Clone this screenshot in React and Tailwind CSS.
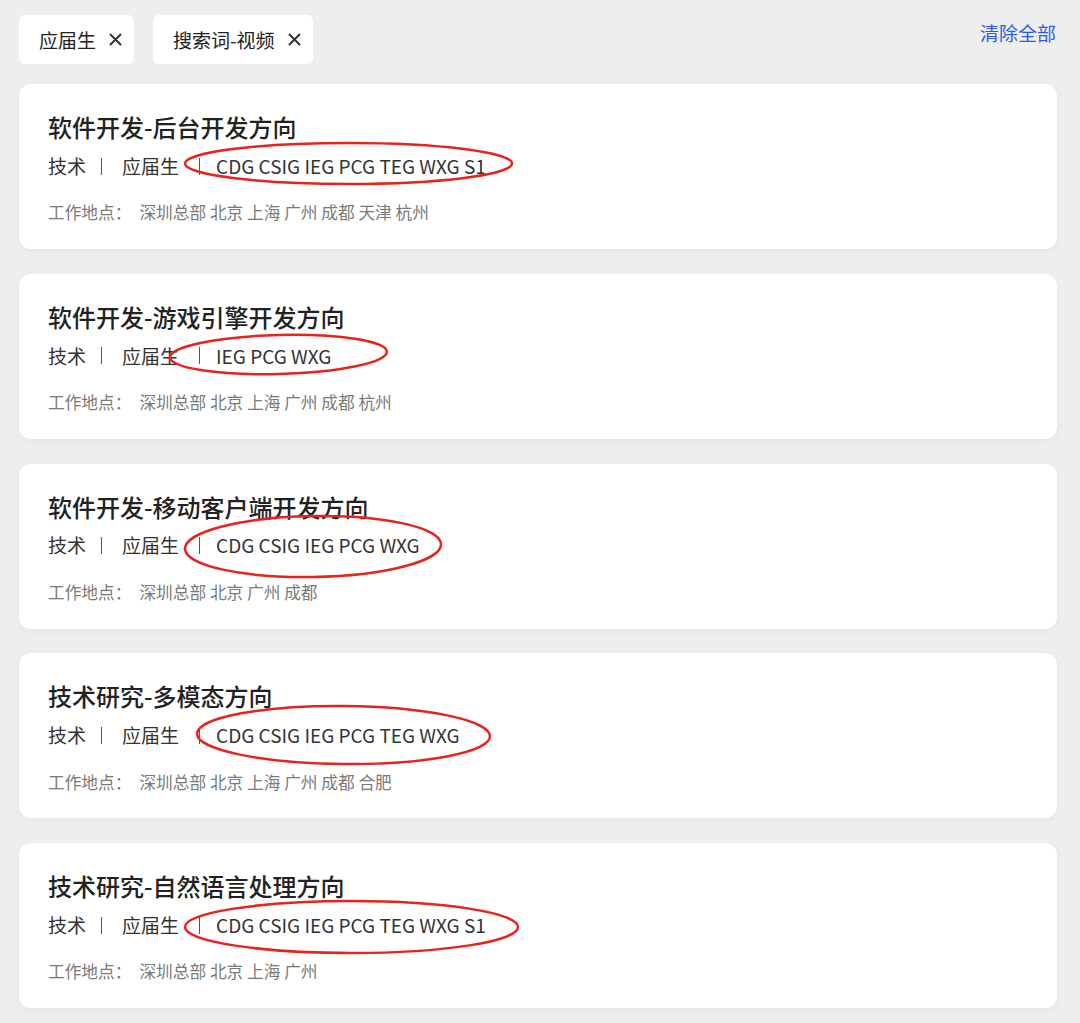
import React from 'react';

const jobs = [
  {
    title: '软件开发-后台开发方向',
    groups: 'CDG CSIG IEG PCG TEG WXG S1',
    places: '深圳总部 北京 上海 广州 成都 天津 杭州',
    ring: { left: 166, top: 59, w: 327, h: 41, rot: 0 },
  },
  {
    title: '软件开发-游戏引擎开发方向',
    groups: 'IEG PCG WXG',
    places: '深圳总部 北京 上海 广州 成都 杭州',
    ring: { left: 151, top: 61, w: 217, h: 39, rot: -1.5 },
  },
  {
    title: '软件开发-移动客户端开发方向',
    groups: 'CDG CSIG IEG PCG WXG',
    places: '深圳总部 北京 广州 成都',
    ring: { left: 166, top: 52, w: 256, h: 61, rot: -1 },
  },
  {
    title: '技术研究-多模态方向',
    groups: 'CDG CSIG IEG PCG TEG WXG',
    places: '深圳总部 北京 上海 广州 成都 合肥',
    ring: { left: 178, top: 53, w: 293, h: 58, rot: 0.5 },
  },
  {
    title: '技术研究-自然语言处理方向',
    groups: 'CDG CSIG IEG PCG TEG WXG S1',
    places: '深圳总部 北京 上海 广州',
    ring: { left: 166, top: 58, w: 333, h: 52, rot: 0 },
  },
];

const CloseIcon = () => (
  <svg width="13" height="13" viewBox="0 0 13 13" className="shrink-0">
    <path d="M1.5 1.5 L11.5 11.5 M11.5 1.5 L1.5 11.5" stroke="#333" strokeWidth="2" strokeLinecap="round" />
  </svg>
);

const Ring = ({ left, top, w, h, rot }) => (
  <svg
    width={w + 6}
    height={h + 6}
    viewBox={`0 0 ${w + 6} ${h + 6}`}
    className="absolute pointer-events-none"
    style={{ left: left - 3, top: top - 3, transform: `rotate(${rot}deg)` }}
  >
    <ellipse cx={(w + 6) / 2} cy={(h + 6) / 2} rx={w / 2} ry={h / 2} fill="none" stroke="#e8231c" strokeWidth="2.5" />
  </svg>
);

const Tag = ({ label }) => (
  <div className="h-[49px] flex items-center gap-[13px] pl-[20px] pr-[12px] bg-white rounded-[6px]">
    <span className="text-[19px] leading-none text-[#222]">{label}</span>
    <CloseIcon />
  </div>
);

export default function App() {
  return (
    <div
      className="min-h-screen bg-[#eeeeee] pt-[15px] pl-[19px] pr-[23px] pb-[16px]"
      style={{ fontFamily: '"Noto Sans CJK SC", "Noto Sans", sans-serif' }}
    >
      <div className="flex items-start justify-between">
        <div className="flex gap-[19px]">
          <Tag label="应届生" />
          <Tag label="搜索词-视频" />
        </div>
        <button className="mt-[6px] mr-[1px] text-[19px] leading-[24px] text-[#2a5be9]">清除全部</button>
      </div>

      <div className="mt-[20px] flex flex-col gap-[24.75px]">
        {jobs.map((job, i) => (
          <div
            key={i}
            className="relative h-[165px] bg-white rounded-[12px] pt-[27px] pl-[29px] shadow-[0_2px_8px_rgba(0,0,0,0.04)]"
          >
            <h3 className="text-[24px] leading-[32px] font-medium text-[#222]">{job.title}</h3>
            <div className="mt-[9px] h-[28px] flex items-center text-[19px] text-[#333]">
              <span>技术</span>
              <span className="ml-[15px] w-px h-[17px] bg-[#555]" />
              <span className="ml-[20px]">应届生</span>
              <span className="ml-[20px] w-px h-[17px] bg-[#555]" />
              <span className="ml-[16px]">{job.groups}</span>
            </div>
            <div className="mt-[21px] h-[24px] flex items-center text-[16.7px] text-[#7a7a7a]">
              <span>工作地点：</span>
              <span className="ml-[8px]">{job.places}</span>
            </div>
            <Ring {...job.ring} />
          </div>
        ))}
      </div>
    </div>
  );
}
